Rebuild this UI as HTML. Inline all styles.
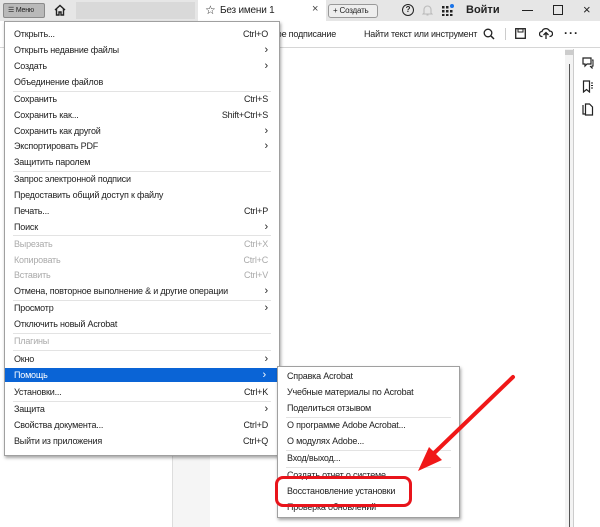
<!DOCTYPE html>
<html><head><meta charset="utf-8"><style>
*{margin:0;padding:0;box-sizing:border-box}
body{width:600px;height:527px;overflow:hidden;background:#fff;font-family:"Liberation Sans",Arial,sans-serif;font-size:9px;letter-spacing:-0.2px;color:#222;position:relative}
.a{position:absolute;white-space:nowrap}
.top{left:0;top:0;width:600px;height:21px;background:#e6e6e6}
.tb{left:0;top:21px;width:600px;height:27px;background:#fff;border-bottom:1px solid #d6d6d6}
.menu{left:4px;top:21px;width:276px;height:435px;background:#fff;border:1px solid #a0a0a0;box-shadow:1px 2px 3px rgba(0,0,0,.35)}
.sub{left:277px;top:366px;width:183px;height:152px;background:#fff;border:1px solid #a0a0a0;box-shadow:1px 2px 3px rgba(0,0,0,.35)}
.it{position:absolute;left:9px;height:16px;line-height:16px;width:258px}
.it .k{position:absolute;right:4px;top:0}
.it.d{color:#aaa}
.sep{position:absolute;left:8px;right:8px;height:1px;background:#e3e3e3}
.hl{background:#0a64d6;color:#fff;left:0;width:274px;padding-left:9px}
.ar{font-size:11px}
</style></head><body>
<div class="a top"></div>
<div class="a" style="left:3px;top:3px;width:42px;height:15px;background:#b9b9b9;border:1px solid #8a8a8a;border-radius:2px;font-size:7px;line-height:13px;padding-left:4px">☰ Меню</div>
<svg class="a" style="left:53px;top:4px" width="14" height="13" viewBox="0 0 14 13"><path d="M2 6L7 1.5L12 6M3.5 5v6h2.5v-3h2v3h2.5v-6" fill="none" stroke="#222" stroke-width="1.4"/></svg>
<div class="a" style="left:76px;top:2px;width:119px;height:17px;background:#d9d9d9"></div>
<div class="a" style="left:198px;top:0;width:128px;height:21px;background:#fff"></div>
<div class="a" style="left:205px;top:3px;font-size:12px">☆</div>
<div class="a" style="left:220px;top:5px;font-size:10px">Без имени 1</div>
<div class="a" style="left:312px;top:3px;font-size:11px;color:#444">×</div>
<div class="a" style="left:328px;top:4px;width:50px;height:14px;border:1px solid #999;border-radius:3px;background:#eee;font-size:8px;line-height:12px;padding-left:4px">+ Создать</div>
<div class="a" style="left:402px;top:4px;width:12px;height:12px;border:1.5px solid #222;border-radius:50%;font-size:8px;line-height:9px;text-align:center;font-weight:bold">?</div>
<svg class="a" style="left:422px;top:4px" width="11" height="12"><path d="M2 9V5.5a3.5 3.5 0 0 1 7 0V9l1 1H1z M4.5 11h2" fill="none" stroke="#bbb" stroke-width="1.1"/></svg>
<svg class="a" style="left:442px;top:4px" width="12" height="12"><g fill="#222"><rect x="0" y="2" width="2.5" height="2.5"/><rect x="4" y="2" width="2.5" height="2.5"/><rect x="0" y="6" width="2.5" height="2.5"/><rect x="4" y="6" width="2.5" height="2.5"/><rect x="8" y="6" width="2.5" height="2.5"/><rect x="0" y="10" width="2.5" height="2"/><rect x="4" y="10" width="2.5" height="2"/><rect x="8" y="10" width="2.5" height="2"/></g><circle cx="10" cy="2" r="2" fill="#1a73e8"/></svg>
<div class="a" style="left:466px;top:4px;font-size:11px;font-weight:bold;letter-spacing:0">Войти</div>
<div class="a" style="left:522px;top:10px;width:11px;height:1px;background:#222"></div>
<div class="a" style="left:553px;top:5px;width:10px;height:10px;border:1px solid #222"></div>
<div class="a" style="left:583px;top:2px;font-size:13px">×</div>
<div class="a tb"></div>
<div class="a" style="left:272px;top:29px">ное подписание</div>
<div class="a" style="left:364px;top:29px">Найти текст или инструмент</div>
<svg class="a" style="left:483px;top:28px" width="12" height="12"><circle cx="5" cy="5" r="3.8" fill="none" stroke="#222" stroke-width="1.3"/><path d="M8 8L11 11" stroke="#222" stroke-width="1.5"/></svg>
<div class="a" style="left:505px;top:28px;width:1px;height:12px;background:#ccc"></div>
<svg class="a" style="left:515px;top:28px" width="11" height="11"><rect x=".7" y=".7" width="9.6" height="9.6" fill="none" stroke="#222" stroke-width="1.3"/><rect x="3" y="1" width="5" height="3" fill="none" stroke="#222"/></svg>
<svg class="a" style="left:539px;top:27px" width="14" height="13"><path d="M3.5 9.5H3a2.5 2.5 0 0 1 0-5A4 4 0 0 1 10.5 4a2.7 2.7 0 0 1 .5 5.5h-.5M7 12V5.5M4.5 8L7 5.5L9.5 8" fill="none" stroke="#222" stroke-width="1.3"/></svg>
<div class="a" style="left:564px;top:26px;font-size:12px;font-weight:bold;letter-spacing:1px">···</div>
<div class="a" style="left:172px;top:456px;width:38px;height:71px;background:#f5f5f5;border-left:1px solid #ddd"></div>
<div class="a" style="left:565px;top:49px;width:9px;height:478px;background:#f3f3f3;border-right:1px solid #ccc"></div>
<div class="a" style="left:565px;top:50px;width:8px;height:5px;background:#ccc"></div>
<div class="a" style="left:569px;top:64px;width:1px;height:463px;background:#555"></div>
<svg class="a" style="left:582px;top:57px" width="12" height="12"><path d="M1 1h8v6H5l-2 2V7H1z" fill="none" stroke="#222" stroke-width="1.2"/><path d="M10 3h1v6h-1v2l-2-2" fill="none" stroke="#222" stroke-width="1.1"/></svg>
<svg class="a" style="left:582px;top:80px" width="12" height="13"><path d="M1.5 1h6v11L4.5 9.5L1.5 12z" fill="none" stroke="#222" stroke-width="1.2"/><path d="M9 3h2M9 5.5h2M9 8h2" stroke="#222"/></svg>
<svg class="a" style="left:582px;top:103px" width="12" height="13"><path d="M1 2v9h2" fill="none" stroke="#222" stroke-width="1.2"/><path d="M3.5 1h4l3 3v8h-7z" fill="none" stroke="#222" stroke-width="1.2"/></svg>

<div class="a menu">
<div class="it" style="top:4px">Открыть...<span class="k">Ctrl+O</span></div>
<div class="it" style="top:20px">Открыть недавние файлы<span class="k ar">›</span></div>
<div class="it" style="top:36px">Создать<span class="k ar">›</span></div>
<div class="it" style="top:52px">Объединение файлов</div>
<div class="sep" style="top:69px"></div>
<div class="it" style="top:69px">Сохранить<span class="k">Ctrl+S</span></div>
<div class="it" style="top:85px">Сохранить как...<span class="k">Shift+Ctrl+S</span></div>
<div class="it" style="top:101px">Сохранить как другой<span class="k ar">›</span></div>
<div class="it" style="top:116px">Экспортировать PDF<span class="k ar">›</span></div>
<div class="it" style="top:132px">Защитить паролем</div>
<div class="sep" style="top:149px"></div>
<div class="it" style="top:149px">Запрос электронной подписи</div>
<div class="it" style="top:165px">Предоставить общий доступ к файлу</div>
<div class="it" style="top:181px">Печать...<span class="k">Ctrl+P</span></div>
<div class="it" style="top:197px">Поиск<span class="k ar">›</span></div>
<div class="sep" style="top:213px"></div>
<div class="it d" style="top:214px">Вырезать<span class="k">Ctrl+X</span></div>
<div class="it d" style="top:230px">Копировать<span class="k">Ctrl+C</span></div>
<div class="it d" style="top:245px">Вставить<span class="k">Ctrl+V</span></div>
<div class="it" style="top:261px">Отмена, повторное выполнение &amp; и другие операции<span class="k ar">›</span></div>
<div class="sep" style="top:278px"></div>
<div class="it" style="top:278px">Просмотр<span class="k ar">›</span></div>
<div class="it" style="top:294px">Отключить новый Acrobat</div>
<div class="sep" style="top:311px"></div>
<div class="it d" style="top:311px">Плагины</div>
<div class="sep" style="top:328px"></div>
<div class="it" style="top:329px">Окно<span class="k ar">›</span></div>
<div class="it hl" style="top:346px;height:14px;line-height:14px">Помощь<span class="k ar" style="right:13px">›</span></div>
<div class="it" style="top:362px">Установки...<span class="k">Ctrl+K</span></div>
<div class="sep" style="top:379px"></div>
<div class="it" style="top:379px">Защита<span class="k ar">›</span></div>
<div class="it" style="top:395px">Свойства документа...<span class="k">Ctrl+D</span></div>
<div class="it" style="top:411px">Выйти из приложения<span class="k">Ctrl+Q</span></div>
</div>

<div class="a sub">
<div class="it" style="top:1px">Справка Acrobat</div>
<div class="it" style="top:17px">Учебные материалы по Acrobat</div>
<div class="it" style="top:33px">Поделиться отзывом</div>
<div class="sep" style="top:50px"></div>
<div class="it" style="top:50px">О программе Adobe Acrobat...</div>
<div class="it" style="top:66px">О модулях Adobe...</div>
<div class="sep" style="top:83px"></div>
<div class="it" style="top:83px">Вход/выход...</div>
<div class="sep" style="top:100px"></div>
<div class="it" style="top:100px">Создать отчет о системе...</div>
<div class="it" style="top:116px">Восстановление установки</div>
<div class="it" style="top:132px">Проверка обновлений</div>
</div>
<div class="a" style="left:275px;top:476px;width:137px;height:31px;border:3.5px solid #e8141b;border-radius:8px"></div>
<svg class="a" style="left:0;top:0" width="600" height="527"><path d="M513 377L428 459" stroke="#f01818" stroke-width="4" stroke-linecap="round"/><path d="M418 471L429 447L442 460z" fill="#f01818"/></svg>
</body></html>
